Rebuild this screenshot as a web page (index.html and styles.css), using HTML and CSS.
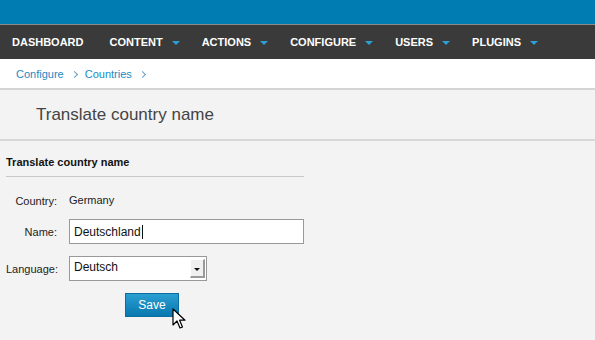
FILE: index.html
```html
<!DOCTYPE html>
<html>
<head>
<meta charset="utf-8">
<link rel="stylesheet" href="styles.css">
</head>
<body>
<div class="topbar"></div>
<nav class="nav">
  <div class="nav-item">DASHBOARD</div>
  <div class="nav-item">CONTENT<span class="caret"></span></div>
  <div class="nav-item">ACTIONS<span class="caret"></span></div>
  <div class="nav-item">CONFIGURE<span class="caret"></span></div>
  <div class="nav-item">USERS<span class="caret"></span></div>
  <div class="nav-item">PLUGINS<span class="caret"></span></div>
</nav>
<div class="crumbs">
  <a class="crumb">Configure</a><span class="sep"></span>
  <a class="crumb">Countries</a><span class="sep"></span>
</div>
<div class="titleband"><h1 class="title">Translate country name</h1></div>
<main class="content">
  <section class="panel">
    <h3 class="panel-title">Translate country name</h3>
    <div class="form">
      <div class="label">Country:</div>
      <div class="value">Germany</div>
      <label class="label">Name:</label>
      <div class="field"><input class="input" type="text" value="Deutschland"><span class="caretline"></span></div>
      <label class="label">Language:</label>
      <div class="select"><span class="select-text">Deutsch</span><span class="select-btn"><span class="select-arrow"></span></span></div>
      <div class="actions"><button class="save">Save</button></div>
    </div>
  </section>
  <svg class="cursor" width="14" height="23" viewBox="0 0 14 23"><path d="M1 1 L1 17 L5 13 L8 20 L10.5 19 L7.6 12.2 L13 12.2 Z" fill="#fff" stroke="#000" stroke-width="1.2" stroke-linejoin="round"/></svg>
</main>
</body>
</html>
```

FILE: styles.css
```css
* { box-sizing: border-box; }
html, body { margin: 0; padding: 0; }
body {
  background: #f3f3f3;
  font-family: "Liberation Sans", Arial, sans-serif;
  width: 595px;
  height: 340px;
  overflow: hidden;
}
.topbar {
  height: 25px;
  background: #017cb2;
  border-bottom: 1px solid #8a8a8a;
}
.nav {
  height: 34px;
  background: #3a3a3a;
  display: flex;
  align-items: center;
  padding-left: 12px;
}
.nav-item {
  color: #fff;
  font-weight: bold;
  font-size: 11px;
  display: flex;
  align-items: center;
  margin-right: 22px;
}
.nav-item:first-child { margin-right: 26px; }
.caret {
  width: 0;
  height: 0;
  border-left: 4px solid transparent;
  border-right: 4px solid transparent;
  border-top: 4px solid #2b9fd6;
  margin-left: 9px;
  margin-top: 1px;
}
.crumbs {
  height: 31px;
  background: #fff;
  border-bottom: 2px solid #d4d4d4;
  display: flex;
  align-items: center;
  padding-left: 16px;
  font-size: 11px;
}
.crumb { color: #1a8ac4; }
.sep {
  width: 5px;
  height: 5px;
  border-top: 1px solid #6a9ec0;
  border-right: 1px solid #6a9ec0;
  transform: rotate(45deg);
  margin: 2px 8px 0 8px;
}
.titleband {
  height: 51px;
  background: #f3f3f3;
  border-bottom: 2px solid #d8d8d8;
  display: flex;
  align-items: center;
  padding-left: 36px;
}
.title {
  margin: 0;
  font-weight: normal;
  font-size: 17px;
  color: #444;
}
.content { position: relative; padding: 13px 0 0 6px; height: 198px; }
.panel { width: 298px; }
.panel-title {
  margin: 0;
  font-size: 11px;
  font-weight: bold;
  color: #111;
  padding: 2px 0 8px;
  border-bottom: 1px solid #c8c8c8;
}
.form {
  display: grid;
  grid-template-columns: 51px 235px;
  column-gap: 12px;
  row-gap: 12px;
  align-items: center;
  margin-top: 17px;
  font-size: 11px;
  color: #222;
}
.label { text-align: right; }
.value { height: 13px; line-height: 13px; font-size: 11px; }
.field { position: relative; }
.input {
  width: 235px;
  height: 25px;
  border: 1px solid #999;
  background: #fff;
  font-family: "Liberation Sans", Arial, sans-serif;
  font-size: 12px;
  padding: 1px 4px 0;
  color: #111;
  outline: none;
  margin: 0;
  display: block;
}
.caretline {
  position: absolute;
  left: 73px;
  top: 6px;
  width: 1px;
  height: 14px;
  background: #111;
}
.select {
  width: 138px;
  height: 25px;
  border: 1px solid #999;
  background: #fff;
  display: flex;
  align-items: center;
  justify-content: space-between;
  padding: 0 1px 0 4px;
  font-size: 12px;
  color: #111;
}
.select-text { margin-top: -4px; }
.select-btn {
  width: 15px;
  height: 19px;
  background: #f0f0f0;
  border-right: 2px solid #9a9a9a;
  border-bottom: 2px solid #9a9a9a;
  border-top: 1px solid #fff;
  border-left: 1px solid #fff;
  display: flex;
  align-items: center;
  justify-content: center;
}
.select-arrow {
  width: 0; height: 0;
  border-left: 3px solid transparent;
  border-right: 3px solid transparent;
  border-top: 3px solid #111;
  margin-top: 2px;
}
.actions { grid-column: 2; padding-left: 56px; }
.save {
  width: 54px;
  height: 24px;
  border: 1px solid #0c6e9e;
  background: linear-gradient(#2a9ed2, #0878ae);
  color: #fff;
  font-family: "Liberation Sans", Arial, sans-serif;
  font-size: 12px;
  padding: 0;
  margin: 0;
  display: block;
}
.cursor { position: absolute; left: 172px; top: 167px; }
```
